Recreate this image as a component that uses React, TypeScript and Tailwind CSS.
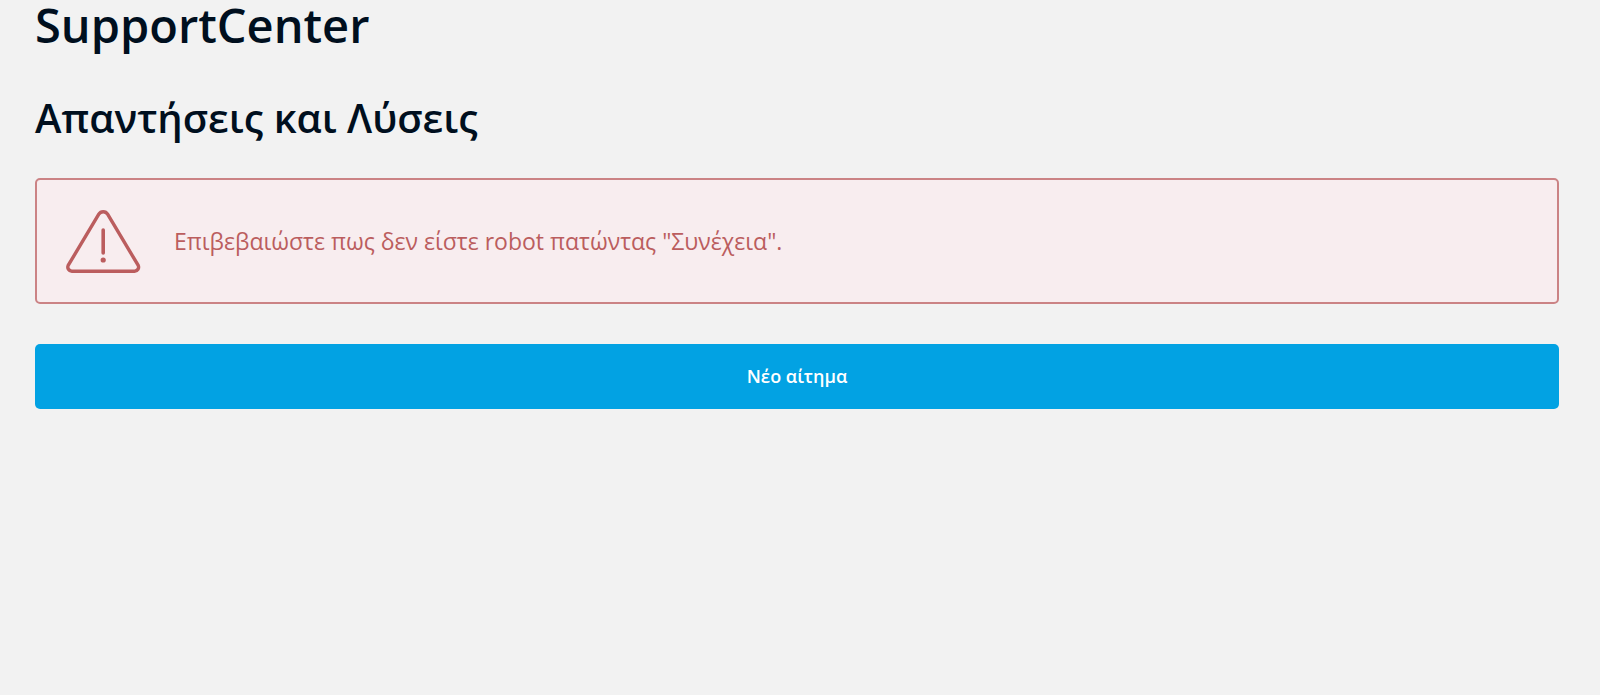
import type { ReactNode } from "react";

// ─────────────────────────────
// App: support center landing page
// ─────────────────────────────
export default function App() {
  return (
    <main className="min-h-screen bg-[#f2f2f2] pr-[41px] pl-[35px] font-['Open_Sans','Noto_Sans',sans-serif] text-[#000f1e]">
      <h1 className="text-[47px] leading-[50px] font-semibold">SupportCenter</h1>
      <h2 className="mt-[42px] text-[40px] leading-[52px] font-semibold">
        Απαντήσεις και Λύσεις
      </h2>

      <AlertBox>Επιβεβαιώστε πως δεν είστε robot πατώντας "Συνέχεια".</AlertBox>

      <button
        type="button"
        className="mt-10 h-[65px] w-full cursor-pointer rounded-[5px] bg-[#02a2e3] pb-[2px] text-lg font-semibold text-white"
      >
        Νέο αίτημα
      </button>
    </main>
  );
}

// ─────────────────────────────
// AlertBox: bordered warning message
// ─────────────────────────────
type AlertBoxProps = {
  children: ReactNode;
};

function AlertBox({ children }: AlertBoxProps) {
  return (
    <div
      role="alert"
      className="mt-[34px] flex items-center gap-[33px] rounded-[5px] border-2 border-[#cb8385] bg-[#f8edef] px-[29px] py-[29px] text-[#bb5d5e]"
    >
      <WarningIcon />
      <p className="text-[23px] leading-8">{children}</p>
    </div>
  );
}

function WarningIcon() {
  return (
    <svg
      viewBox="0 -1 75 64"
      className="h-16 w-[75px] shrink-0"
      fill="none"
      stroke="currentColor"
      strokeWidth="3.4"
      aria-hidden="true"
    >
      <path d="M32.8 4.2A5.1 5.1 0 0 1 41.6 4.2L72.2 55.4A4.1 4.1 0 0 1 68.6 61.2H5.8A4.1 4.1 0 0 1 2.2 55.4Z" />
      <path d="M37.2 20V43" strokeWidth="3.6" strokeLinecap="round" />
      <circle cx="37.2" cy="50" r="2.6" fill="currentColor" stroke="none" />
    </svg>
  );
}
